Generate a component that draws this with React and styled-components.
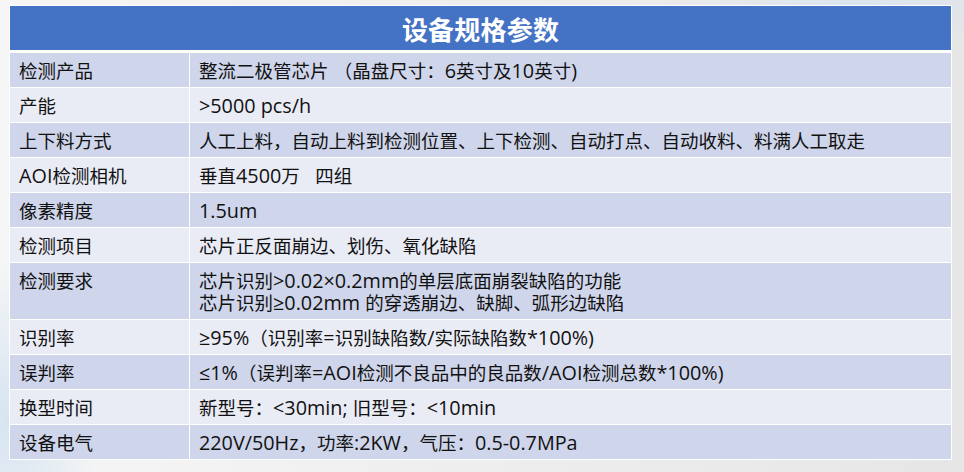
import React from "react";
import styled, { createGlobalStyle } from "styled-components";

const GlobalStyle = createGlobalStyle`
  html, body {
    margin: 0;
    padding: 0;
  }
  body {
    width: 964px;
    height: 472px;
    overflow: hidden;
    font-family: "Noto Sans CJK SC", sans-serif;
    background:
      radial-gradient(ellipse 90px 160px at 10px 420px, rgba(200, 220, 240, 0.7), rgba(200, 220, 240, 0) 100%),
      radial-gradient(ellipse 180px 40px at 860px 8px, rgba(215, 228, 242, 0.8), rgba(215, 228, 242, 0) 100%),
      linear-gradient(90deg, #f6f6f6 0%, #eeeeee 50%, #e6e6e6 100%);
  }
`;

const Page = styled.div`
  padding: 5px 0 0 9px;
`;

const Grid = styled.div`
  display: grid;
  grid-template-columns: 179px 761px;
  gap: 1px;
  padding: 1px;
  width: 941px;
  background: #fff;
`;

const Title = styled.div`
  grid-column: 1 / span 2;
  height: 44px;
  margin-bottom: 2px;
  background: #4472c4;
  color: #fff;
  font-size: 26px;
  font-weight: 700;
  display: flex;
  align-items: center;
  justify-content: center;
  letter-spacing: 0.2px;
`;

const Cell = styled.div`
  background: ${p => (p.odd ? "#cfd5ea" : "#e9ebf5")};
  color: #111;
  font-size: 18.5px;
  line-height: 22px;
  padding: 6px 9px;
  white-space: pre;
`;

const Line = styled.div`
  height: 22px;
`;

const Latin = styled.span`
  font-family: "Open Sans", sans-serif;
  font-size: 19.8px;
  line-height: 22px;
`;

// ascii runs (and × ≥ ≤) look like Segoe UI in the original, a touch larger than the CJK
function Mixed({ text }) {
  const parts = text.split(/([\u0020-\u007e×≥≤]+)/);
  return parts.map((p, i) =>
    i % 2 === 1 ? <Latin key={i}>{p}</Latin> : p
  );
}

const rows = [
  ["检测产品", "整流二极管芯片 （晶盘尺寸：6英寸及10英寸)"],
  ["产能", ">5000 pcs/h"],
  ["上下料方式", "人工上料，自动上料到检测位置、上下检测、自动打点、自动收料、料满人工取走"],
  ["AOI检测相机", "垂直4500万   四组"],
  ["像素精度", "1.5um"],
  ["检测项目", "芯片正反面崩边、划伤、氧化缺陷"],
  [
    "检测要求",
    "芯片识别>0.02×0.2mm的单层底面崩裂缺陷的功能\n芯片识别≥0.02mm 的穿透崩边、缺脚、弧形边缺陷"
  ],
  ["识别率", "≥95%（识别率=识别缺陷数/实际缺陷数*100%)"],
  ["误判率", "≤1%（误判率=AOI检测不良品中的良品数/AOI检测总数*100%)"],
  ["换型时间", "新型号：<30min; 旧型号：<10min"],
  ["设备电气", "220V/50Hz，功率:2KW，气压：0.5-0.7MPa"]
];

export default function App() {
  return (
    <>
      <GlobalStyle />
      <Page>
        <Grid>
          <Title>设备规格参数</Title>
          {rows.map((r, i) => (
            <React.Fragment key={r[0]}>
              <Cell odd={i % 2 === 0}>
                <Line>
                  <Mixed text={r[0]} />
                </Line>
              </Cell>
              <Cell odd={i % 2 === 0}>
                {r[1].split("\n").map(l => (
                  <Line key={l}>
                    <Mixed text={l} />
                  </Line>
                ))}
              </Cell>
            </React.Fragment>
          ))}
        </Grid>
      </Page>
    </>
  );
}
